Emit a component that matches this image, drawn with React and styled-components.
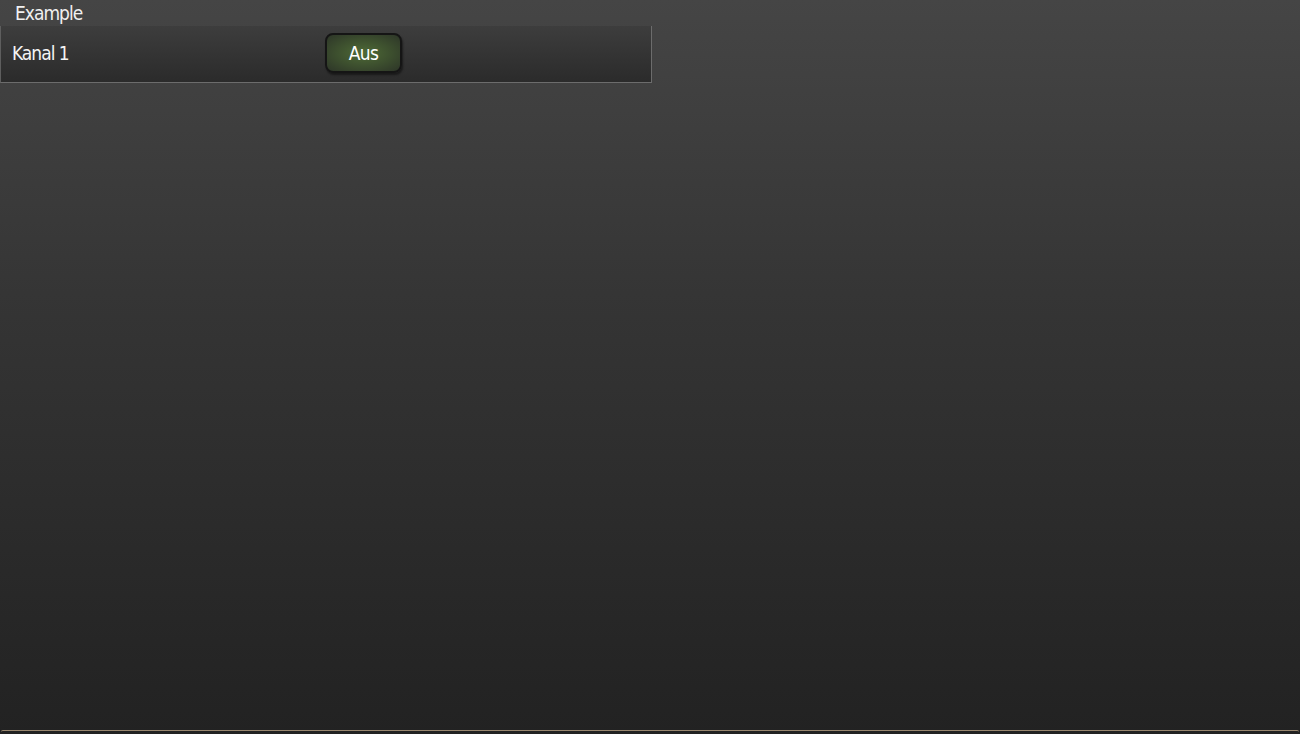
import React from "react"
import styled, { createGlobalStyle } from "styled-components"

const GlobalStyle = createGlobalStyle`
  html, body {
    margin: 0;
    padding: 0;
    height: 100%;
  }
  body {
    font-family: "DejaVu Sans Condensed", "Liberation Sans Narrow", "Liberation Sans", sans-serif;
    color: #f2f2f2;
    background: #222;
  }
  #root {
    height: 100%;
  }
`

const Page = styled.div`
  width: 100%;
  height: 734px;
  display: flex;
  flex-direction: column;
  background: linear-gradient(to bottom, #454545 0%, #353535 40%, #222222 100%);
  overflow: hidden;
`

const Content = styled.div`
  flex: 1;
  display: flex;
  flex-direction: column;
  align-items: flex-start;
`

const Title = styled.div`
  height: 26px;
  padding-left: 15px;
  font-size: 19px;
  letter-spacing: -1px;
  line-height: 27px;
  color: #f0f0f0;
`

const Group = styled.div`
  width: 650px;
  border-left: 1px solid #5e5e5e;
  border-right: 1px solid #6c6c6c;
  border-bottom: 1px solid #6c6c6c;
  background: linear-gradient(to bottom, #3d3d3d 0%, #2b2b2b 100%);
`

const Row = styled.div`
  height: 56px;
  display: grid;
  grid-template-columns: 313px 1fr;
  align-items: center;
  padding-left: 11px;
`

const Label = styled.div`
  font-size: 19px;
  letter-spacing: -1px;
  color: #f4f4f4;
  margin-top: -2px;
`

const Toggle = styled.button`
  width: 77px;
  height: 40px;
  margin-top: -2px;
  border-radius: 8px;
  border: 2px solid #151515;
  background: radial-gradient(ellipse at center, #4e6a36 0%, #3c4e2e 55%, #2d3528 100%);
  box-shadow: 1px 2px 2px rgba(0, 0, 0, 0.45);
  color: #ffffff;
  font-family: inherit;
  font-size: 19px;
  letter-spacing: -0.6px;
  padding: 0;
  cursor: pointer;
`

const Footer = styled.div`
  height: 3px;
  margin: 0 1px;
  border-top: 1px solid #9a8870;
  border-radius: 2px 2px 0 0;
`

export default function App() {
  return (
    <>
      <GlobalStyle />
      <Page>
        <Content>
          <Title>Example</Title>
          <Group>
            <Row>
              <Label>Kanal 1</Label>
              <div>
                <Toggle>Aus</Toggle>
              </div>
            </Row>
          </Group>
        </Content>
        <Footer />
      </Page>
    </>
  )
}
